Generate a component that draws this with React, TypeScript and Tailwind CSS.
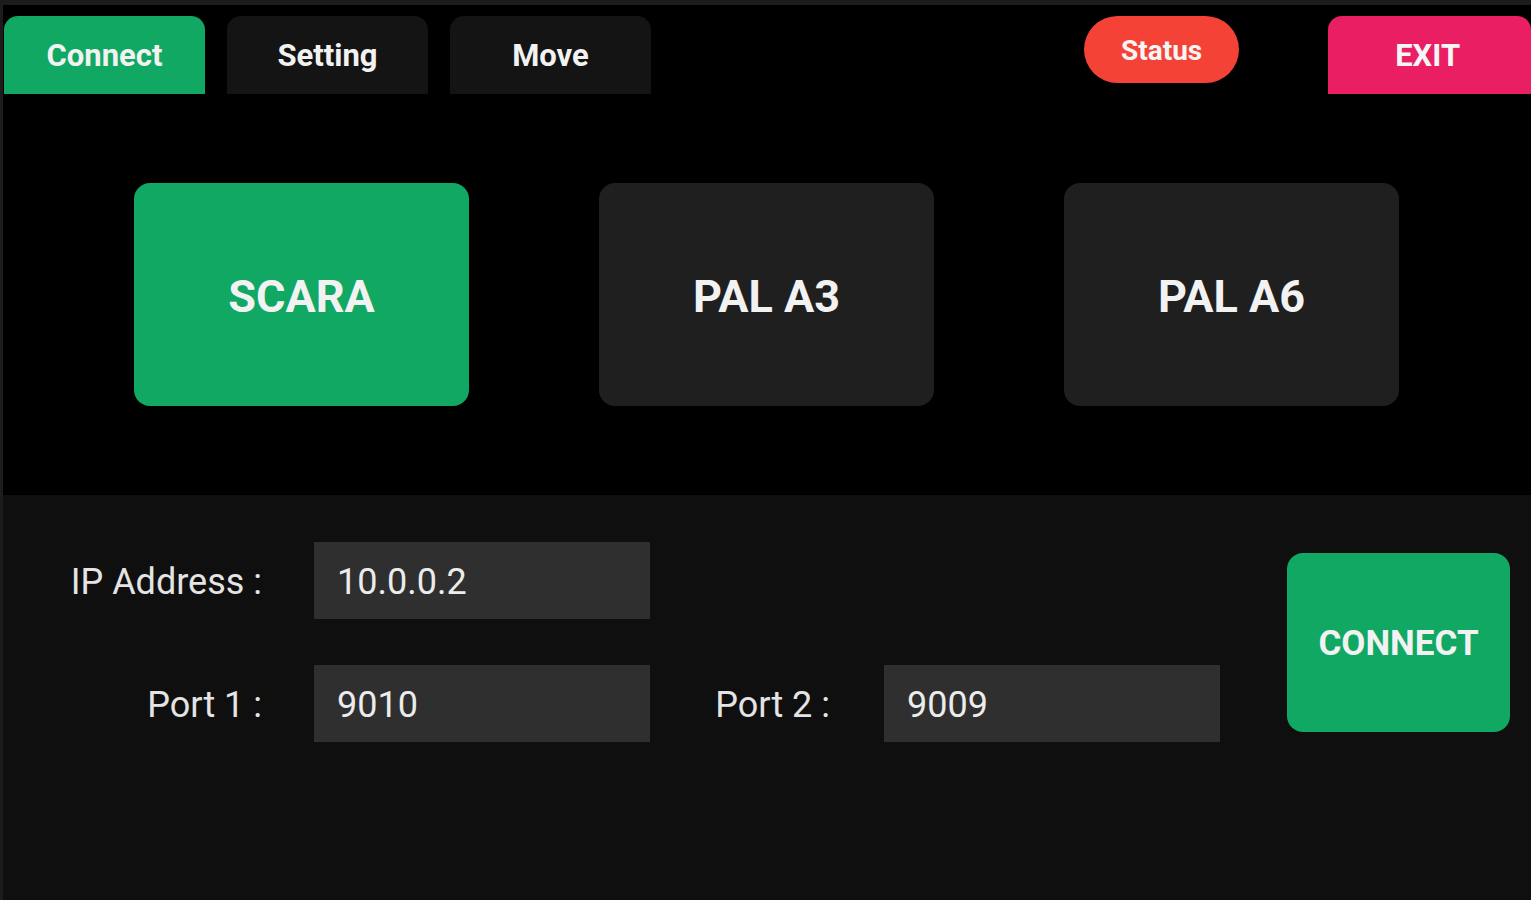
const font = { fontFamily: 'Roboto, "Noto Sans", sans-serif' };

const tabs = [
  { label: 'Connect', active: true },
  { label: 'Setting', active: false },
  { label: 'Move', active: false },
];

const robots = [
  { label: 'SCARA', active: true },
  { label: 'PAL A3', active: false },
  { label: 'PAL A6', active: false },
];

function Field({ value }: { value: string }) {
  return (
    <div className="w-[336px] h-[77px] bg-[#2f2f2f] flex items-center pl-[23px] pt-[3px] text-[36px] text-[#ececec]">
      {value}
    </div>
  );
}

export default function App() {
  return (
    <div
      className="w-[1531px] h-[900px] overflow-hidden bg-black border-t-[5px] border-l-[3px] border-[#1c1c1c] flex flex-col"
      style={font}
    >
      {/* Top bar */}
      <div className="flex items-start pt-[11px] h-[89px] shrink-0">
        <div className="flex gap-[22px] pl-[1px]">
          {tabs.map(t => (
            <div
              key={t.label}
              className={`w-[201px] h-[78px] rounded-t-[14px] flex items-center justify-center pt-[3px] text-[31px] font-bold text-[#f2f2f2] ${
                t.active ? 'bg-[#10a863]' : 'bg-[#141414]'
              }`}
            >
              {t.label}
            </div>
          ))}
        </div>
        <div className="ml-[433px] w-[157px] h-[67px] rounded-full bg-[#f44336] flex items-center justify-center pt-[3px] text-[28px] font-bold text-[#f5f5f5]">
          Status
        </div>
        <div className="ml-[89px] w-[205px] h-[78px] rounded-t-[14px] bg-[#e91e63] flex items-center justify-center pt-[3px] text-[31px] font-bold text-[#f5f5f5] pr-[4px]">
          EXIT
        </div>
      </div>

      {/* Robot selection */}
      <div className="h-[401px] shrink-0 flex items-start pt-[89px] pl-[131px] gap-[130px]">
        {robots.map(r => (
          <div
            key={r.label}
            className={`w-[335px] h-[223px] rounded-[16px] flex items-center justify-center pt-[5px] text-[45px] font-bold text-[#f2f2f2] ${
              r.active ? 'bg-[#10a863]' : 'bg-[#1f1f1f]'
            }`}
          >
            {r.label}
          </div>
        ))}
      </div>

      {/* Connection panel */}
      <div className="flex-1 bg-[#0f0f0f] flex items-start pt-[47px]">
        <div className="flex flex-col gap-[46px]">
          <div className="flex items-center">
            <div className="w-[259px] text-right pt-[3px] text-[36px] text-[#e4e4e4]">IP Address :</div>
            <div className="ml-[52px]">
              <Field value="10.0.0.2" />
            </div>
          </div>
          <div className="flex items-center">
            <div className="w-[259px] text-right pt-[3px] text-[36px] text-[#e4e4e4]">Port 1 :</div>
            <div className="ml-[52px]">
              <Field value="9010" />
            </div>
            <div className="w-[180px] text-right pt-[3px] text-[36px] text-[#e4e4e4]">Port 2 :</div>
            <div className="ml-[54px]">
              <Field value="9009" />
            </div>
          </div>
        </div>
        <div className="ml-[67px] mt-[11px] w-[223px] h-[179px] rounded-[16px] bg-[#10a863] flex items-center justify-center pt-[3px] text-[35px] font-bold text-[#f2f2f2]">
          CONNECT
        </div>
      </div>
    </div>
  );
}
